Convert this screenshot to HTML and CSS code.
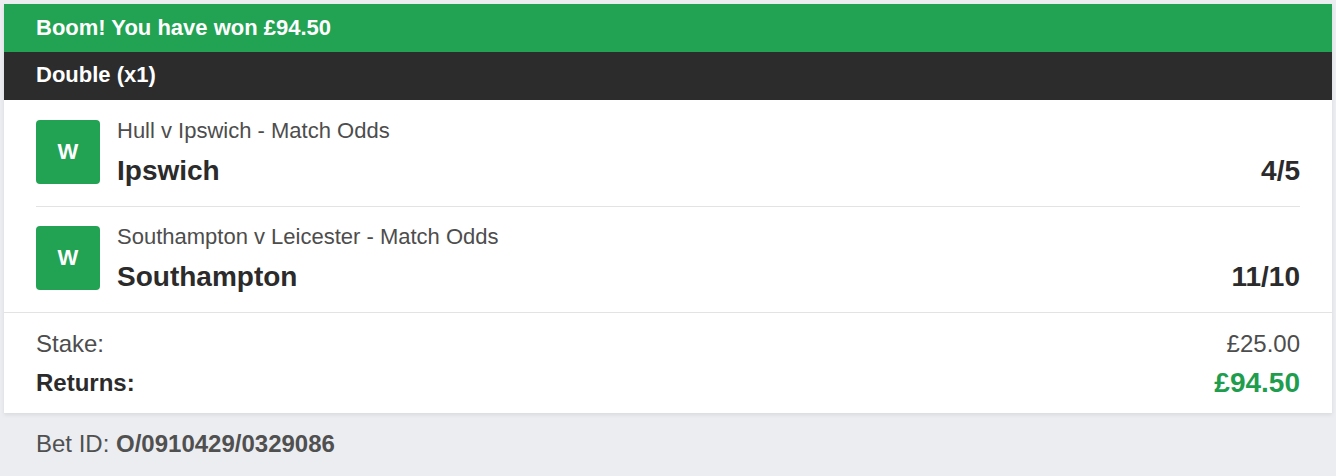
FILE: index.html
```html
<!DOCTYPE html>
<html>
<head>
    <meta charset="UTF-8">
    <meta name="viewport" content="width=device-width, initial-scale=1.0">
    <title>Bet Receipt</title>
    <link rel="stylesheet" href="styles.css">
</head>
<body>
    <div class="receipt">
        <div class="win-banner">Boom! You have won £94.50</div>
        <div class="bet-type">Double (x1)</div>

        <div class="legs">
            <div class="leg">
                <div class="result">W</div>
                <div class="leg-info">
                    <div class="market">Hull v Ipswich - Match Odds</div>
                    <div class="pick">
                        <span class="selection">Ipswich</span>
                        <span class="odds">4/5</span>
                    </div>
                </div>
            </div>
            <div class="leg">
                <div class="result">W</div>
                <div class="leg-info">
                    <div class="market">Southampton v Leicester - Match Odds</div>
                    <div class="pick">
                        <span class="selection">Southampton</span>
                        <span class="odds">11/10</span>
                    </div>
                </div>
            </div>
        </div>

        <div class="totals">
            <div class="total-row stake">
                <span>Stake:</span>
                <span>£25.00</span>
            </div>
            <div class="total-row returns">
                <span>Returns:</span>
                <span class="returns-value">£94.50</span>
            </div>
        </div>
    </div>

    <p class="bet-id">Bet ID: <strong>O/0910429/0329086</strong></p>
</body>
</html>
```

FILE: styles.css
```css
body {
    margin: 0;
    padding: 4px;
    background: #ebedf1;
    font-family: "Liberation Sans", Arial, Helvetica, sans-serif;
    color: #2b2b2b;
}

.receipt {
    background: #fff;
    box-shadow: 0 2px 4px rgba(0, 0, 0, 0.08);
}

.win-banner {
    background: #22a353;
    color: #fff;
    font-size: 22px;
    font-weight: bold;
    height: 48px;
    line-height: 48px;
    padding: 0 32px;
}

.bet-type {
    background: #2c2c2c;
    color: #fff;
    font-size: 22px;
    font-weight: bold;
    height: 48px;
    line-height: 46px;
    padding: 0 32px;
}

.legs {
    padding-top: 1px;
}

.leg {
    display: flex;
    gap: 17px;
    margin: 0 32px;
    padding: 19px 0 22px;
    border-bottom: 1px solid #e3e3e3;
}

.leg:last-child {
    border-bottom: none;
}

.result {
    flex: none;
    width: 64px;
    height: 64px;
    border-radius: 4px;
    background: #22a353;
    color: #fff;
    font-size: 22px;
    font-weight: bold;
    display: flex;
    align-items: center;
    justify-content: center;
}

.leg-info {
    flex: 1;
    height: 64px;
}

.market {
    font-size: 22px;
    line-height: 21px;
    color: #4d4d4d;
}

.pick {
    display: flex;
    justify-content: space-between;
    align-items: center;
    margin-top: 16px;
    line-height: 28px;
    font-size: 28px;
    font-weight: bold;
    color: #2b2b2b;
}

.totals {
    border-top: 1px solid #e3e3e3;
    padding: 16px 32px 13px;
    display: flex;
    flex-direction: column;
    gap: 7px;
}

.total-row {
    display: flex;
    justify-content: space-between;
    align-items: center;
    font-size: 24px;
}

.stake {
    height: 30px;
    color: #4d4d4d;
}

.returns {
    height: 34px;
    font-weight: bold;
    color: #2b2b2b;
}

.returns-value {
    font-size: 28px;
    color: #1f9d4f;
}

.bet-id {
    margin: 0;
    padding: 16px 32px;
    line-height: 30px;
    font-size: 24px;
    color: #505050;
}
```
